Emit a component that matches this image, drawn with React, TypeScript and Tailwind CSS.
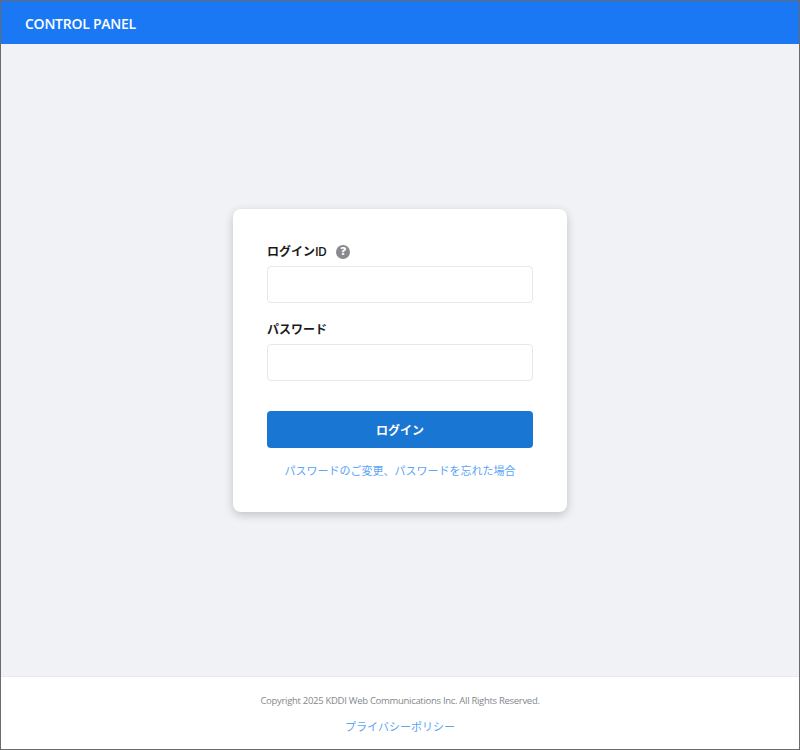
export default function App() {
  return (
    <div className="flex h-[750px] w-[800px] flex-col border border-[#6b6b6b] bg-[#f0f2f5] font-['Open_Sans','Noto_Sans_CJK_JP',sans-serif]">
      <header className="flex h-[43px] shrink-0 items-center bg-[#1a78f5] pl-6 pt-[2px]">
        <span className="text-[14px] font-semibold tracking-[-0.25px] text-white">CONTROL PANEL</span>
      </header>
      <main className="flex flex-1 items-center justify-center">
        <div className="flex h-[303px] w-[334px] flex-col rounded-lg bg-white px-[34px] pt-[33px] shadow-[0_3px_10px_rgba(0,0,0,0.2)]">
          <div className="flex h-[20px] items-center gap-[10px]">
            <span className="pt-[1px] text-[12px] font-semibold text-[#1a1a1a]">ログイン<span className="tracking-[-0.6px]">ID</span></span>
            <span className="flex h-[14px] w-[14px] items-center justify-center rounded-full bg-[#8a8a8e] text-[11px] font-extrabold text-white">?</span>
          </div>
          <input className="mt-[4px] h-[37px] w-full rounded border border-[#e6e8ec] bg-white" />
          <div className="mt-[16px] flex h-[20px] items-center pt-[2px]">
            <span className="text-[12px] font-semibold text-[#1a1a1a]">パスワード</span>
          </div>
          <input className="mt-[5px] h-[37px] w-full rounded border border-[#e6e8ec] bg-white" />
          <button className="mt-[30px] flex h-[37px] w-full items-center justify-center rounded bg-[#1976d2] pt-[3px] text-[12px] font-semibold text-white">ログイン</button>
          <a className="mt-[14px] text-center text-[11px] leading-[18px] text-[#5aa5f5]">パスワードのご変更、パスワードを忘れた場合</a>
        </div>
      </main>
      <footer className="flex h-[73px] shrink-0 flex-col items-center border-t border-[#e8eaee] bg-white">
        <p className="mt-[15px] text-[9.5px] leading-[17px] tracking-[-0.3px] text-[#84888d]">Copyright 2025 KDDI Web Communications Inc. All Rights Reserved.</p>
        <a className="mt-[9px] text-[11px] leading-[18px] text-[#5aa5f5]">プライバシーポリシー</a>
      </footer>
    </div>
  );
}
